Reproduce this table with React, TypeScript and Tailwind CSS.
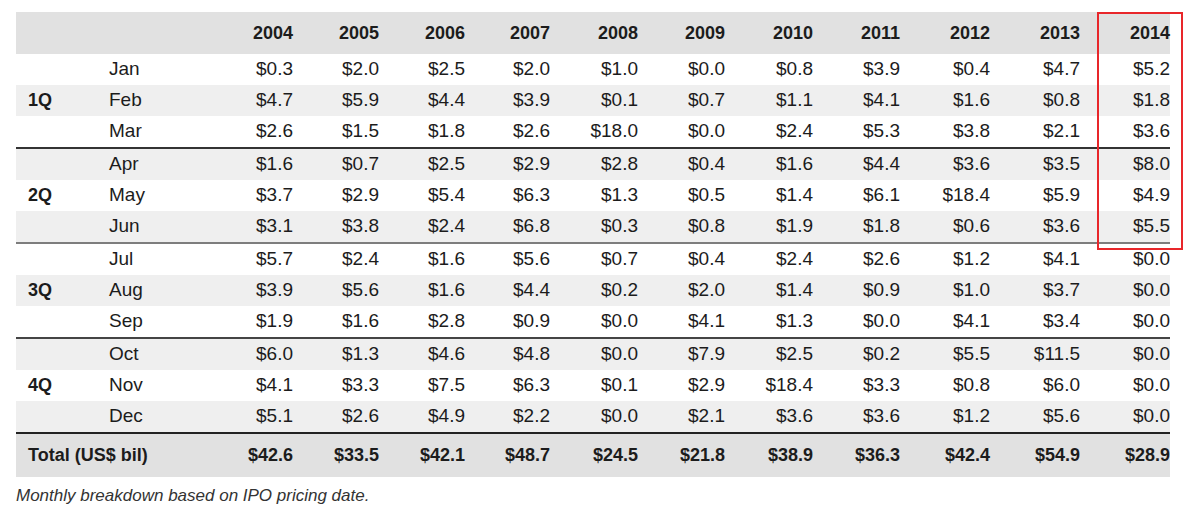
const years = ["2004", "2005", "2006", "2007", "2008", "2009", "2010", "2011", "2012", "2013", "2014"];

const quarters = [
  {
    label: "1Q",
    divider: "border-[#333]",
    rows: [
      ["Jan", "$0.3", "$2.0", "$2.5", "$2.0", "$1.0", "$0.0", "$0.8", "$3.9", "$0.4", "$4.7", "$5.2"],
      ["Feb", "$4.7", "$5.9", "$4.4", "$3.9", "$0.1", "$0.7", "$1.1", "$4.1", "$1.6", "$0.8", "$1.8"],
      ["Mar", "$2.6", "$1.5", "$1.8", "$2.6", "$18.0", "$0.0", "$2.4", "$5.3", "$3.8", "$2.1", "$3.6"],
    ],
  },
  {
    label: "2Q",
    divider: "border-[#7d7d7d]",
    rows: [
      ["Apr", "$1.6", "$0.7", "$2.5", "$2.9", "$2.8", "$0.4", "$1.6", "$4.4", "$3.6", "$3.5", "$8.0"],
      ["May", "$3.7", "$2.9", "$5.4", "$6.3", "$1.3", "$0.5", "$1.4", "$6.1", "$18.4", "$5.9", "$4.9"],
      ["Jun", "$3.1", "$3.8", "$2.4", "$6.8", "$0.3", "$0.8", "$1.9", "$1.8", "$0.6", "$3.6", "$5.5"],
    ],
  },
  {
    label: "3Q",
    divider: "border-[#444]",
    rows: [
      ["Jul", "$5.7", "$2.4", "$1.6", "$5.6", "$0.7", "$0.4", "$2.4", "$2.6", "$1.2", "$4.1", "$0.0"],
      ["Aug", "$3.9", "$5.6", "$1.6", "$4.4", "$0.2", "$2.0", "$1.4", "$0.9", "$1.0", "$3.7", "$0.0"],
      ["Sep", "$1.9", "$1.6", "$2.8", "$0.9", "$0.0", "$4.1", "$1.3", "$0.0", "$4.1", "$3.4", "$0.0"],
    ],
  },
  {
    label: "4Q",
    divider: "border-[#222]",
    rows: [
      ["Oct", "$6.0", "$1.3", "$4.6", "$4.8", "$0.0", "$7.9", "$2.5", "$0.2", "$5.5", "$11.5", "$0.0"],
      ["Nov", "$4.1", "$3.3", "$7.5", "$6.3", "$0.1", "$2.9", "$18.4", "$3.3", "$0.8", "$6.0", "$0.0"],
      ["Dec", "$5.1", "$2.6", "$4.9", "$2.2", "$0.0", "$2.1", "$3.6", "$3.6", "$1.2", "$5.6", "$0.0"],
    ],
  },
];

const totals = ["$42.6", "$33.5", "$42.1", "$48.7", "$24.5", "$21.8", "$38.9", "$36.3", "$42.4", "$54.9", "$28.9"];

const cols =
  "grid grid-cols-[93px_96px_88px_86px_86px_85px_88px_87px_88px_87px_90px_90px_90px] items-center";

export default function App() {
  let rowIndex = 0;
  return (
    <div
      className="w-[1200px] h-[508px] bg-white text-[#1c1c1c] relative"
      style={{ fontFamily: '"Liberation Sans", Arial, sans-serif' }}
    >
      <div className="pt-3 pl-4 w-[1170px]">
        {/* header */}
        <div className={`${cols} h-[42px] bg-[#e1e1e1] text-[18px] font-bold`}>
          <div />
          <div />
          {years.map((y) => (
            <div key={y} className="text-right">
              {y}
            </div>
          ))}
        </div>

        {quarters.map((q) => (
          <div key={q.label} className={`border-b-2 ${q.divider}`}>
            {q.rows.map((r, i) => {
              const shaded = rowIndex++ % 2 === 1;
              return (
                <div
                  key={r[0]}
                  className={`${cols} h-[31px] text-[19px] ${shaded ? "bg-[#efefef]" : "bg-white"}`}
                >
                  <div className="pl-3 font-bold text-[18px]">{i === 1 ? q.label : ""}</div>
                  <div>{r[0]}</div>
                  {r.slice(1).map((v, j) => (
                    <div key={j} className="text-right">
                      {v}
                    </div>
                  ))}
                </div>
              );
            })}
          </div>
        ))}

        {/* total */}
        <div className={`${cols} h-[43px] bg-[#e1e1e1] text-[18px] font-bold`}>
          <div className="pl-3 col-span-2 whitespace-nowrap">Total (US$ bil)</div>
          {totals.map((t, j) => (
            <div key={j} className="text-right">
              {t}
            </div>
          ))}
        </div>

        <p className="mt-[6px] text-[17px] italic text-[#333]">
          Monthly breakdown based on IPO pricing date.
        </p>
      </div>

      {/* highlight box around 2014 */}
      <div className="absolute left-[1097px] top-[12px] w-[86px] h-[238px] border-2 border-[#e8262a]" />
    </div>
  );
}
